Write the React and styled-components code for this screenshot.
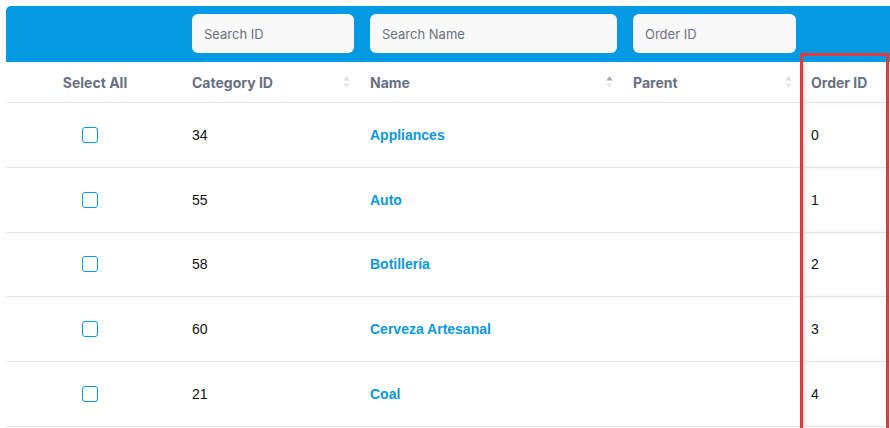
import React from 'react';
import styled, { createGlobalStyle } from 'styled-components';

const GlobalStyle = createGlobalStyle`
    body {
        margin: 0;
        background: #fff;
        font-family: Inter, "Noto Sans", sans-serif;
    }
`

const rows = [
    { id: 34, name: 'Appliances', order: 0 },
    { id: 55, name: 'Auto', order: 1 },
    { id: 58, name: 'Botillería', order: 2 },
    { id: 60, name: 'Cerveza Artesanal', order: 3 },
    { id: 21, name: 'Coal', order: 4 },
]

const SortIcon = ({ active }) => (
    <Sorter>
        <svg width="7" height="14" viewBox="0 0 7 14">
            <path d="M3.5 1 L6.5 5.5 L0.5 5.5 Z" fill={active ? '#a3a8b3' : '#dcdee3'} />
            <path d="M3.5 13 L6.5 8.5 L0.5 8.5 Z" fill="#e6e7ea" />
        </svg>
    </Sorter>
)

const App = () => {
    return (
        <Page>
            <GlobalStyle />
            <Table>
                <FilterBar>
                    <FilterCell />
                    <FilterCell><SearchInput placeholder="Search ID" /></FilterCell>
                    <FilterCell><SearchInput placeholder="Search Name" /></FilterCell>
                    <FilterCell><SearchInput placeholder="Order ID" /></FilterCell>
                    <FilterCell />
                </FilterBar>
                <HeadRow>
                    <HeadCell center>Select All</HeadCell>
                    <HeadCell>Category ID<SortIcon /></HeadCell>
                    <HeadCell>Name<SortIcon active /></HeadCell>
                    <HeadCell>Parent<SortIcon /></HeadCell>
                    <StickyHead>Order ID</StickyHead>
                </HeadRow>
                {rows.map(row => (
                    <Row key={row.id}>
                        <Cell center><Checkbox type="checkbox" /></Cell>
                        <Cell>{row.id}</Cell>
                        <Cell><NameLink href="#">{row.name}</NameLink></Cell>
                        <Cell />
                        <StickyCell>{row.order}</StickyCell>
                    </Row>
                ))}
                <Highlight />
            </Table>
        </Page>
    )
}

export default App;

const Page = styled.div`
    padding: 6px 0 0 6px;
    height: 422px;
    overflow: hidden;
`

const Table = styled.div`
    position: relative;
    width: 884px;
`

const columns = '174px 178px 263px 179px 1fr'

const FilterBar = styled.div`
    display: grid;
    grid-template-columns: ${columns};
    height: 56px;
    background: #0399e3;
    border-top-left-radius: 5px;
`

const FilterCell = styled.div`
    padding: 8px 4px 0 12px;
`

const SearchInput = styled.input`
    box-sizing: border-box;
    width: 100%;
    height: 39px;
    border: none;
    border-radius: 6px;
    background: #f9f9fa;
    padding: 0 12px;
    font-family: Inter, "Noto Sans", sans-serif;
    font-size: 13px;
    outline: none;
    &::placeholder {
        color: #6b717d;
    }
`

const HeadRow = styled.div`
    display: grid;
    grid-template-columns: ${columns};
    height: 40px;
    border-bottom: 1px solid #e3e4e8;
`

const HeadCell = styled.div`
    display: flex;
    align-items: center;
    justify-content: ${p => (p.center ? 'center' : 'flex-start')};
    padding: ${p => (p.center ? '0 0 0 4px' : '0 8px 0 12px')};
    font-size: 14px;
    font-weight: 700;
    color: #687082;
`

const Sorter = styled.span`
    display: flex;
    margin-left: auto;
`

const StickyHead = styled(HeadCell)`
    padding-left: 11px;
    box-shadow: inset 7px 0 7px -4px rgba(0, 0, 0, 0.2);
`

const Row = styled.div`
    display: grid;
    grid-template-columns: ${columns};
    height: 63.8px;
    border-bottom: 1px solid #e3e4e8;
`

const Cell = styled.div`
    display: flex;
    align-items: center;
    justify-content: ${p => (p.center ? 'center' : 'flex-start')};
    padding: ${p => (p.center ? '0 7px 0 0' : '0 12px')};
    font-family: "Liberation Sans", Arial, sans-serif;
    font-size: 14px;
    color: #111;
`

const StickyCell = styled(Cell)`
    padding-left: 11px;
    box-shadow: inset 7px 0 7px -4px rgba(0, 0, 0, 0.2);
`

const NameLink = styled.a`
    color: #0a98e0;
    font-weight: 700;
    text-decoration: none;
`

const Checkbox = styled.input`
    appearance: none;
    width: 16px;
    height: 16px;
    margin: 0;
    border: 1.5px solid #0a98e0;
    border-radius: 3px;
    background: #fff;
    box-sizing: border-box;
`

const Highlight = styled.div`
    position: absolute;
    left: 794px;
    top: 47px;
    width: 89px;
    height: 400px;
    box-sizing: border-box;
    border: 3px solid #e23a3a;
    pointer-events: none;
`
